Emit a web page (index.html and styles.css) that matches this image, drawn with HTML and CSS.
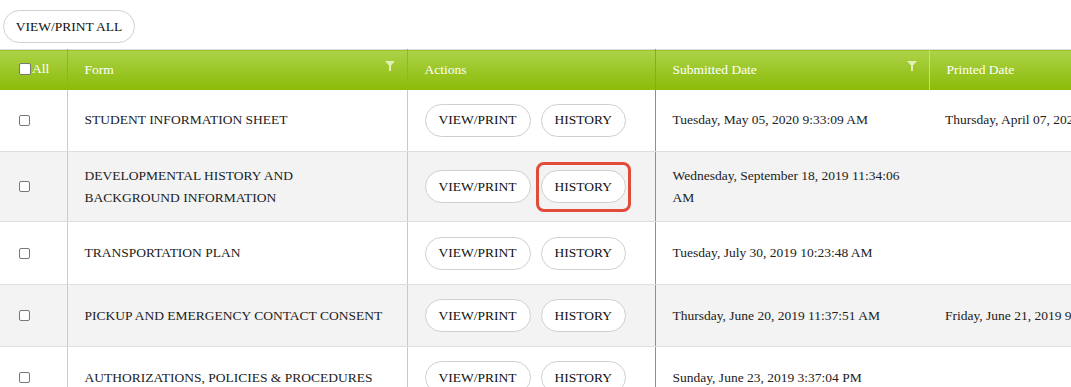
FILE: index.html
```html
<!DOCTYPE html>
<html>
<head>
<meta charset="utf-8">
<link rel="stylesheet" href="styles.css">
</head>
<body>
<div class="toolbar">
  <button class="pill pill-all">VIEW/PRINT ALL</button>
</div>
<table class="grid">
  <colgroup>
    <col class="c-check">
    <col class="c-form">
    <col class="c-actions">
    <col class="c-sub">
    <col class="c-print">
  </colgroup>
  <thead>
    <tr>
      <th class="th-check"><label class="all"><span class="hbox"></span>All</label></th>
      <th class="th-form">Form<svg class="filter" viewBox="0 0 10 10"><path d="M0 0H10L6 4.5V10H4V4.5Z"/></svg></th>
      <th class="th-actions">Actions</th>
      <th class="th-sub">Submitted Date<svg class="filter" viewBox="0 0 10 10"><path d="M0 0H10L6 4.5V10H4V4.5Z"/></svg></th>
      <th class="th-print">Printed Date</th>
    </tr>
  </thead>
  <tbody>
    <tr class="r1">
      <td class="td-check"><span class="box"></span></td>
      <td class="td-form">STUDENT INFORMATION SHEET</td>
      <td class="td-actions"><button class="pill">VIEW/PRINT</button><button class="pill">HISTORY</button></td>
      <td class="td-sub">Tuesday, May 05, 2020 9:33:09 AM</td>
      <td class="td-print">Thursday, April 07, 2020 10:12:44 AM</td>
    </tr>
    <tr class="r2 alt">
      <td class="td-check"><span class="box"></span></td>
      <td class="td-form">DEVELOPMENTAL HISTORY AND<br>BACKGROUND INFORMATION</td>
      <td class="td-actions"><button class="pill">VIEW/PRINT</button><span class="mark"><button class="pill">HISTORY</button></span></td>
      <td class="td-sub">Wednesday, September 18, 2019 11:34:06 AM</td>
      <td class="td-print"></td>
    </tr>
    <tr class="r3">
      <td class="td-check"><span class="box"></span></td>
      <td class="td-form">TRANSPORTATION PLAN</td>
      <td class="td-actions"><button class="pill">VIEW/PRINT</button><button class="pill">HISTORY</button></td>
      <td class="td-sub">Tuesday, July 30, 2019 10:23:48 AM</td>
      <td class="td-print"></td>
    </tr>
    <tr class="r4 alt">
      <td class="td-check"><span class="box"></span></td>
      <td class="td-form">PICKUP AND EMERGENCY CONTACT CONSENT</td>
      <td class="td-actions"><button class="pill">VIEW/PRINT</button><button class="pill">HISTORY</button></td>
      <td class="td-sub">Thursday, June 20, 2019 11:37:51 AM</td>
      <td class="td-print">Friday, June 21, 2019 9:02:17 AM</td>
    </tr>
    <tr class="r5">
      <td class="td-check"><span class="box"></span></td>
      <td class="td-form">AUTHORIZATIONS, POLICIES &amp; PROCEDURES</td>
      <td class="td-actions"><button class="pill">VIEW/PRINT</button><button class="pill">HISTORY</button></td>
      <td class="td-sub">Sunday, June 23, 2019 3:37:04 PM</td>
      <td class="td-print"></td>
    </tr>
  </tbody>
</table>
</body>
</html>
```

FILE: styles.css
```css
html, body {
  margin: 0;
  padding: 0;
  background: #fff;
  overflow: hidden;
}
body {
  font-family: "Liberation Serif", "Times New Roman", serif;
  font-size: 13.5px;
  color: #222;
  width: 1071px;
  height: 387px;
}
.toolbar {
  padding: 10px 0 6px 3px;
  height: 33px;
}
.pill {
  font-family: "Liberation Serif", "Times New Roman", serif;
  font-size: 13.5px;
  color: #111;
  background: #fff;
  border: 1px solid #cfcfcf;
  border-radius: 17px;
  height: 33px;
  padding: 0 13px;
  margin: 0;
  cursor: pointer;
  white-space: nowrap;
}
.pill-all {
  width: 132px;
  padding: 0;
}
.grid {
  border-collapse: collapse;
  table-layout: fixed;
  width: 1200px;
}
.c-check { width: 67px; }
.c-form { width: 340px; }
.c-actions { width: 248px; }
.c-sub { width: 274px; }
.c-print { width: 271px; }

thead tr {
  height: 40px;
}
th {
  background: linear-gradient(#acd248, #8bbb08);
  color: #fff;
  font-weight: normal;
  text-align: left;
  padding: 0 17px;
  border-top: 1px solid #dcdcdc;
  position: relative;
  white-space: nowrap;
}
.th-check {
  padding: 0 0 0 19px;
  border-right: 1px solid #8fae3a;
}
.th-form { border-right: 1px solid #9aa08a; }
.th-actions { border-right: 1px solid #8d9680; }
.th-sub { border-right: 1px solid #c4dd88; }
.th-print { padding-left: 17px; }
.all {
  display: inline-flex;
  align-items: center;
  gap: 1px;
}
.hbox {
  display: inline-block;
  width: 10px;
  height: 10px;
  background: #fff;
  border: 1px solid #777;
  border-radius: 2px;
}
.filter {
  position: absolute;
  width: 10px;
  height: 10px;
  right: 12px;
  top: 11px;
  fill: #e2f0b8;
}

td {
  border-bottom: 1px solid #dedede;
  padding: 0 17px;
  vertical-align: middle;
  line-height: 22px;
}
tr.alt td { background: #f3f3f3; }
.r1 { height: 62px; }
.r2 { height: 70px; }
.r3 { height: 63px; }
.r4 { height: 62px; }
.r5 { height: 62px; }
.td-check {
  padding: 0 0 0 19px;
  border-right: 1px solid #cccccc;
}
.box {
  display: block;
  width: 9px;
  height: 9px;
  border: 1px solid #777;
  border-radius: 2px;
  background: #fff;
}
.td-form { border-right: 1px solid #c9c9c9; }
.td-actions {
  padding-left: 17px;
  border-right: 1px solid #8f8f8f;
  white-space: nowrap;
}
.td-actions .pill + .pill,
.td-actions .mark {
  margin-left: 10px;
}
.mark {
  position: relative;
  display: inline-block;
}
.mark::after {
  content: "";
  position: absolute;
  left: -5px;
  right: -5px;
  top: -8px;
  bottom: -9px;
  border: 3px solid #e04b3a;
  border-radius: 8px;
}
.td-sub { padding-right: 17px; }
.td-print { padding-left: 16px; white-space: nowrap; }
```
